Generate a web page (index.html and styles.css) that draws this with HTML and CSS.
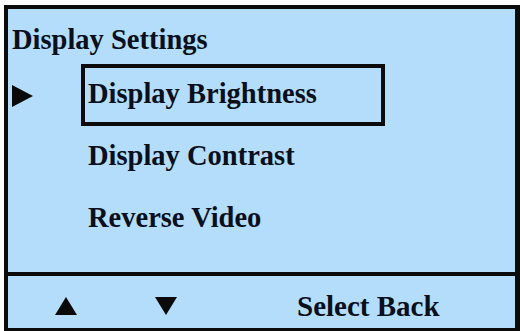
FILE: index.html
```html
<!DOCTYPE html>
<html>
<head>
<meta charset="utf-8">
<link rel="stylesheet" href="styles.css">
</head>
<body>
<div class="screen">
  <div class="main">
    <div class="title">Display Settings</div>
    <div class="row">
      <div class="pointer"><svg width="21" height="22" viewBox="0 0 21 22"><polygon points="0,0 21,11 0,22" fill="#0a0a0a"/></svg></div>
      <div class="item selected">Display Brightness</div>
    </div>
    <div class="row">
      <div class="pointer"></div>
      <div class="item">Display Contrast</div>
    </div>
    <div class="row">
      <div class="pointer"></div>
      <div class="item">Reverse Video</div>
    </div>
  </div>
  <div class="footer">
    <div class="btn up"><svg width="22" height="18" viewBox="0 0 22 18"><polygon points="11,0 22,18 0,18" fill="#0a0a0a"/></svg></div>
    <div class="btn down"><svg width="22" height="18" viewBox="0 0 22 18"><polygon points="0,0 22,0 11,18" fill="#0a0a0a"/></svg></div>
    <div class="labels">Select Back</div>
  </div>
</div>
</body>
</html>
```
FILE: styles.css
```css
html, body {
  margin: 0;
  padding: 0;
  background: #ffffff;
}
body {
  width: 520px;
  height: 331px;
  overflow: hidden;
}
.screen {
  margin: 5px 0 0 4px;
  width: 516px;
  height: 326px;
  box-sizing: border-box;
  border-style: solid;
  border-color: #0b0b0b;
  border-width: 4px 5px 3px 4px;
  background: #b4dcfb;
  display: flex;
  flex-direction: column;
  font-family: "Liberation Serif", serif;
  font-weight: bold;
  color: #0a0f1c;
}
.main {
  height: 263px;
  border-bottom: 4px solid #0b0b0b;
  display: flex;
  flex-direction: column;
}
.title {
  height: 55px;
  font-size: 28.5px;
  line-height: 28px;
  padding: 17px 0 0 4px;
  box-sizing: border-box;
}
.row {
  height: 62px;
  display: flex;
  align-items: stretch;
}
.pointer {
  width: 73px;
  box-sizing: border-box;
  padding-left: 4px;
  display: flex;
  align-items: center;
}
.pointer svg {
  display: block;
  margin-top: 2px;
}
.item {
  width: 304px;
  box-sizing: border-box;
  border: 4px solid transparent;
  padding: 0 0 2px 3px;
  font-size: 28.5px;
  display: flex;
  align-items: center;
}
.item.selected {
  border-color: #0b0b0b;
}
.footer {
  flex: 1;
  display: flex;
  align-items: center;
  padding-top: 8px;
  box-sizing: border-box;
}
.btn svg {
  display: block;
}
.up {
  margin-left: 47px;
}
.down {
  margin-left: 78px;
}
.labels {
  margin-left: 120px;
  font-size: 29px;
}
```
